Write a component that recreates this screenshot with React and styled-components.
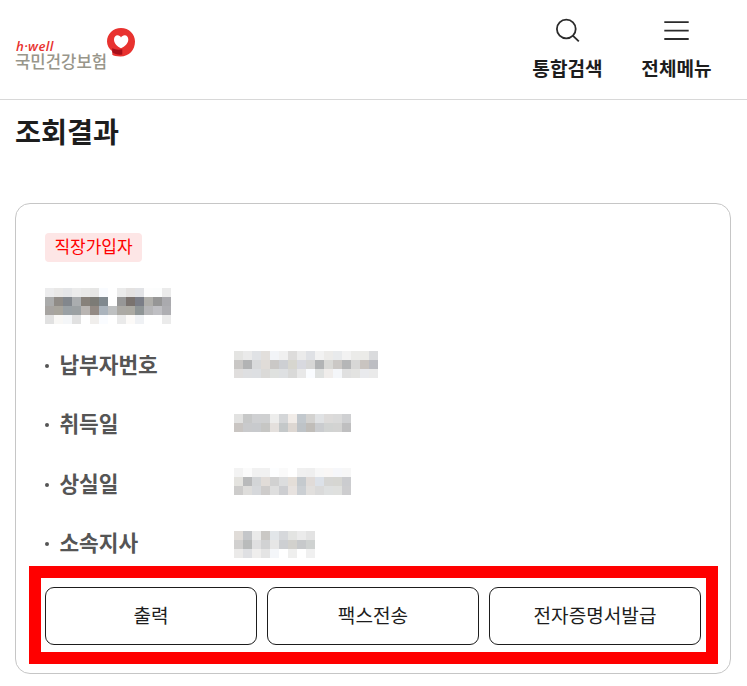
import React from 'react';
import styled, { createGlobalStyle } from 'styled-components';

const GlobalStyle = createGlobalStyle`
  * {
    box-sizing: border-box;
  }
  body {
    margin: 0;
    background: #fff;
    color: #1d1d1d;
    font-family: "Noto Sans CJK KR", "Noto Sans", sans-serif;
  }
`;

const Page = styled.div`
  width: 747px;
  height: 686px;
  overflow: hidden;
`;

const Header = styled.header`
  height: 100px;
  display: flex;
  justify-content: space-between;
  border-bottom: 1px solid #d8d8d8;
`;

const Logo = styled.div`
  display: flex;
  padding: 28px 0 0 15px;
`;

const LogoText = styled.div`
  width: 92px;
  padding-top: 12px;
  white-space: nowrap;
`;

const LogoEnglish = styled.div`
  height: 12px;
  padding-left: 1px;
  font-family: "Open Sans", "Noto Sans", sans-serif;
  font-size: 13.2px;
  font-style: italic;
  font-weight: 600;
  letter-spacing: 0.4px;
  line-height: 13px;
  color: #e8312f;
`;

const LogoKorean = styled.div`
  font-size: 16.7px;
  font-weight: 500;
  line-height: 18px;
  color: #98968a;
`;

const HeaderMenu = styled.nav`
  display: flex;
  gap: 38px;
  padding: 16px 35px 0 0;
`;

const MenuButton = styled.button`
  width: 71px;
  display: flex;
  flex-direction: column;
  align-items: center;
  gap: 12px;
  padding: 0;
  border: 0;
  background: none;
  color: #1d1d1d;
  font-family: inherit;
  font-size: 19.1px;
  font-weight: 700;
  line-height: 24px;
  white-space: nowrap;
`;

const Title = styled.h1`
  height: 103px;
  margin: 0;
  padding: 11px 0 0 15px;
  font-size: 28.3px;
  font-weight: 700;
  line-height: 40px;
`;

const Card = styled.section`
  width: 716px;
  height: 471px;
  margin-left: 15px;
  padding: 29px;
  border: 1px solid #c6c6c6;
  border-radius: 15px;
`;

const Tag = styled.div`
  width: 97px;
  height: 29px;
  border-radius: 4px;
  background: #fde6e6;
  color: #ff0000;
  font-size: 17px;
  line-height: 25px;
  text-align: center;
`;

const Name = styled.div`
  height: 36px;
  margin-top: 26px;
`;

const InfoList = styled.ul`
  height: 242px;
  margin: 12px 0 0;
  padding: 0;
  list-style: none;
`;

const InfoRow = styled.li`
  height: 59.4px;
  display: flex;
  align-items: flex-start;
`;

const Label = styled.div`
  width: 189px;
  height: 58px;
  display: flex;
  align-items: center;
  color: #555;
  font-size: 21.4px;
  font-weight: 700;
  line-height: 56px;
  &::before {
    content: '';
    width: 4px;
    height: 4px;
    margin: 2px 10.4px 0 0;
    border-radius: 50%;
    background: #555;
  }
`;

const LabelText = styled.span`
  height: 58px;
`;

const Value = styled.div`
  padding-top: ${props => props.$top}px;
`;

const MosaicGrid = styled.div`
  display: grid;
  grid-template-columns: repeat(${props => props.$cols}, 9px);
  grid-auto-rows: 9px;
`;

const Cell = styled.span`
  background: ${props => props.$color};
`;

const Buttons = styled.div`
  position: relative;
  display: grid;
  grid-template-columns: repeat(3, 1fr);
  gap: 10px;
  margin-top: 9px;
`;

const ActionButton = styled.button`
  height: 58px;
  padding: 0 0 2px;
  border: 1px solid #1d1d1d;
  border-radius: 9px;
  background: #fff;
  color: #1d1d1d;
  font-family: inherit;
  font-size: 19.1px;
  line-height: 54px;
`;

const Highlight = styled.div`
  position: absolute;
  top: -21px;
  right: -17px;
  bottom: -19px;
  left: -16px;
  border: 12px solid #ff0000;
  pointer-events: none;
`;

const nameCells = [
  'ececed e9e8e7 e5e6e8 ececec e9e9e8 e6e6e5 f9fbfe ffffff ebebeb e4e2e1 e2e3e6 fdfdfd fcfdfd ebebeb',
  'aaabab 908c87 82878d aaadaf 87817a 7c7b76 80898f ffffff 979797 7a736f 7b7e87 afaeaa 969696 aaaaae',
  'a7a4a1 a8a59d 9aa1a5 9ca1a3 b9b5b2 938a84 abb4bd bec0c1 acaaa5 acaaa3 8f9596 b6b6b8 bfbfc3 aeaeb2',
  'e1e1e1 f8f7f5 f4f6f8 e1e1e1 ffffff f0eeec fafcff ffffff eaeaea fcfaf8 eff1f4 ffffff ffffff ebebeb',
];

const rows = [
  {
    label: '납부자번호',
    top: 15,
    cells: [
      'e4e4e2 eaeaea e0e2e5 e2dfdc f2f4f7 f0f0f0 dddcdb ebebeb dfe1e5 f2f2f2 ecebe9 e8eaec f2f2f2 ebebe9 ebebe8 dadbdd',
      'c9c7c5 b2b3b4 d9dadb e0dcd8 cac8c6 cdcfd3 d7d6cf d8d9df d7d7d6 b2b4b5 d9d9d6 cbc8c5 b5b6b7 d7d7d6 c9c4c0 bcbdc2',
      'e0dedd dedfe1 dddfe2 dbdad8 dfe1df dee0e2 d9d9d8 e8e8e8 fafcff dfe1e0 f0edeb f4f6f9 e0e0e0 e3e3e1 e9eaed eaeaea',
    ],
  },
  {
    label: '취득일',
    top: 18.6,
    cells: [
      'e2e2e1 c7c8c8 cfd0d2 cfd0d1 ededec d4d6d8 f1ece8 c2c8cd d3d2d0 e0e2e4 dddbda dadada cfd0d2',
      'c9c5c2 c9cacc c8cacd c6c6c4 e4e0dd c4c8c9 ddd7d2 bec3c7 c0bdb9 cacccf d1d3d2 d3d3d2 bfbfc0',
    ],
  },
  {
    label: '상실일',
    top: 13.2,
    cells: [
      'f3f3f3 fbfbfb f1f1f1 f1f1f1 fdfeff fafafa ffffff f0f0f0 efefef f7f7f7 f9f7f6 f6f7fa f7f7f7',
      'e4e3df b9babb d3d5d7 e1dcd8 d1d1d1 dcddde e4ded8 c5cace e0dbd8 dce1e8 d6d6d4 d6d6d2 cbcccf',
      'cdcccb dedddb d6d8db cecccb dedede cdced1 e7e2df cbcfd3 e1dfdd dadada dee0e0 dfe0de cdcdcf',
    ],
  },
  {
    label: '소속지사',
    top: 16.8,
    cells: [
      'e0dcd8 c4c6c9 eaeaea cac8c5 e2e6e9 d6d8db e3e4e2 ebebeb e3e3e3',
      'd1d0cf b9bbbb dfdfe0 d1d2d3 e6e6e6 cdcfd2 d2d1cd c7c9cb cfd2d1',
      'ebeae9 dfe0e3 efeeed e4e4e4 f4f6f9 ffffff efefee ffffff f0f0f0',
    ],
  },
];

const Mosaic = ({ cells }) => (
  <MosaicGrid $cols={cells[0].split(' ').length}>
    {cells.join(' ').split(' ').map((color, i) => (
      <Cell key={i} $color={`#${color}`} />
    ))}
  </MosaicGrid>
);

const LogoMark = () => (
  <svg width="28" height="29" viewBox="0 0 28 29">
    <path d="M14 0C22 0 28 6 28 13.5C28 22 22 28.5 13.5 28.5C9.5 28.5 6.5 28 5.3 26.8V23.2C2 20.8 0 17.5 0 13.5C0 6 6 0 14 0Z" fill="#e8322f" />
    <path d="M5.2 20.3C8.5 21.8 12 22 15.3 21.2V26.4C11.8 27 8.2 26.5 5.2 24.2Z" fill="#a80f19" />
    <path d="M14 20.2C10.2 18.4 7 15.5 7 11.5C7 8.9 8.6 7.3 10.5 7.3C12.2 7.3 13.4 8.3 14 9.5C14.8 8.3 16 7.3 17.7 7.3C19.8 7.3 21.3 9 21.3 11.5C21.3 15.5 17.8 18.5 14 20.2Z" fill="#fff" />
  </svg>
);

const SearchIcon = () => (
  <svg width="30" height="28" viewBox="0 0 30 28" fill="none" stroke="#2b2b2b" strokeWidth="1.8">
    <circle cx="13.3" cy="13" r="9.4" />
    <path d="M19.8 19.6L25.8 25.4" />
  </svg>
);

const MenuIcon = () => (
  <svg width="26" height="28" viewBox="0 0 26 28" fill="none" stroke="#2b2b2b" strokeWidth="1.8">
    <path d="M0.3 6.2H24.7M0.3 14.6H24.7M0.3 23H24.7" />
  </svg>
);

const App = () => (
  <Page>
    <GlobalStyle />
    <Header>
      <Logo>
        <LogoText>
          <LogoEnglish>h·well</LogoEnglish>
          <LogoKorean>국민건강보험</LogoKorean>
        </LogoText>
        <LogoMark />
      </Logo>
      <HeaderMenu>
        <MenuButton>
          <SearchIcon />
          통합검색
        </MenuButton>
        <MenuButton>
          <MenuIcon />
          전체메뉴
        </MenuButton>
      </HeaderMenu>
    </Header>
    <Title>조회결과</Title>
    <Card>
      <Tag>직장가입자</Tag>
      <Name>
        <Mosaic cells={nameCells} />
      </Name>
      <InfoList>
        {rows.map(row => (
          <InfoRow key={row.label}>
            <Label><LabelText>{row.label}</LabelText></Label>
            <Value $top={row.top}>
              <Mosaic cells={row.cells} />
            </Value>
          </InfoRow>
        ))}
      </InfoList>
      <Buttons>
        <ActionButton>출력</ActionButton>
        <ActionButton>팩스전송</ActionButton>
        <ActionButton>전자증명서발급</ActionButton>
        <Highlight />
      </Buttons>
    </Card>
  </Page>
);

export default App;
